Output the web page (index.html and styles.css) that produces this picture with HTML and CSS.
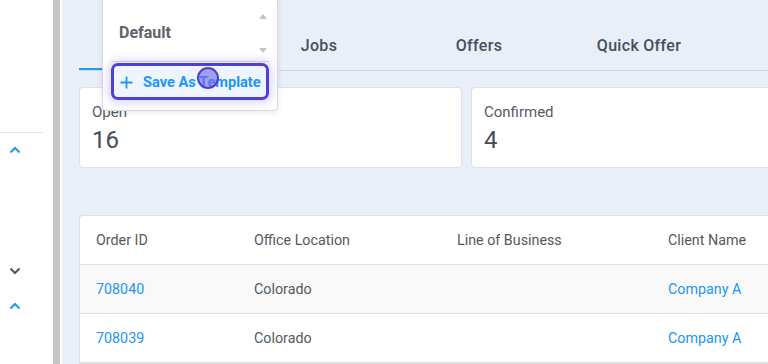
FILE: index.html
```html
<!DOCTYPE html>
<html>
<head>
<meta charset="utf-8">
<link rel="stylesheet" href="styles.css">
</head>
<body>
<div class="app">
  <aside class="sidebar">
    <div class="side-divider"></div>
    <div class="chev chev-up c1"><svg width="12" height="8" viewBox="0 0 12 8"><path d="M1.5 6.5 L6 2 L10.5 6.5" fill="none" stroke="#1e9be0" stroke-width="2"/></svg></div>
    <div class="chev chev-down c2"><svg width="12" height="8" viewBox="0 0 12 8"><path d="M1.5 1.5 L6 6 L10.5 1.5" fill="none" stroke="#555" stroke-width="2"/></svg></div>
    <div class="chev chev-up c3"><svg width="12" height="8" viewBox="0 0 12 8"><path d="M1.5 6.5 L6 2 L10.5 6.5" fill="none" stroke="#1e9be0" stroke-width="2"/></svg></div>
  </aside>
  <div class="scrollbar"></div>
  <div class="sliver"></div>
  <main class="main">
    <nav class="tabs">
      <div class="tab active"></div>
      <div class="tab">Jobs</div>
      <div class="tab">Offers</div>
      <div class="tab">Quick Offer</div>
    </nav>
    <section class="cards">
      <div class="card">
        <div class="card-label">Open</div>
        <div class="card-value">16</div>
      </div>
      <div class="card">
        <div class="card-label">Confirmed</div>
        <div class="card-value">4</div>
      </div>
    </section>
    <section class="table">
      <div class="row head">
        <div class="c col1">Order ID</div>
        <div class="c col2">Office Location</div>
        <div class="c col3">Line of Business</div>
        <div class="c col4">Client Name</div>
      </div>
      <div class="row alt">
        <div class="c col1 link">708040</div>
        <div class="c col2">Colorado</div>
        <div class="c col3"></div>
        <div class="c col4 link">Company A</div>
      </div>
      <div class="row">
        <div class="c col1 link">708039</div>
        <div class="c col2">Colorado</div>
        <div class="c col3"></div>
        <div class="c col4 link">Company A</div>
      </div>
    </section>
  </main>
</div>

<div class="dropdown">
  <div class="dd-select">
    <span class="dd-value">Default</span>
    <span class="dd-arrows">
      <svg width="8" height="5" viewBox="0 0 8 5"><path d="M0 5 L4 0 L8 5 Z" fill="#c4c4c4"/></svg>
      <svg width="8" height="5" viewBox="0 0 8 5"><path d="M0 0 L4 5 L8 0 Z" fill="#c4c4c4"/></svg>
    </span>
  </div>
  <div class="dd-divider"></div>
  <div class="dd-button">
    <svg class="plus" width="13" height="13" viewBox="0 0 13 13"><path d="M6.5 0.5 V12.5 M0.5 6.5 H12.5" stroke="#2196f3" stroke-width="1.8"/></svg>
    <span>Save As Template</span>
  </div>
  <div class="cursor"></div>
</div>
</body>
</html>
```

FILE: styles.css
```css
* { box-sizing: border-box; }
html, body {
  margin: 0;
  padding: 0;
  width: 768px;
  height: 364px;
  overflow: hidden;
  font-family: Roboto, "Liberation Sans", sans-serif;
}
.app {
  display: flex;
  height: 364px;
}
.sidebar {
  width: 53px;
  flex: none;
  background: #fff;
  display: flex;
  flex-direction: column;
}
.side-divider {
  margin-top: 132px;
  width: 43px;
  height: 1px;
  background: #e3e3e3;
}
.chev {
  width: 12px;
  height: 8px;
  margin-left: 9px;
  display: flex;
}
.c1 { margin-top: 13px; }
.c2 { margin-top: 113px; }
.c3 { margin-top: 27px; }
.scrollbar {
  width: 7px;
  flex: none;
  background: #c5c5c5;
}
.sliver {
  width: 2px;
  flex: none;
  background: #fff;
}
.main {
  flex: 1;
  min-width: 0;
  background: #e8eff9;
  padding-left: 17px;
  overflow: hidden;
}
.tabs {
  height: 71px;
  display: flex;
  align-items: flex-end;
  border-bottom: 1px solid #cfd7e2;
  width: 1000px;
}
.tab {
  width: 160px;
  height: 50px;
  display: flex;
  align-items: center;
  justify-content: center;
  font-size: 16px;
  font-weight: 500;
  color: #474f5f;
  letter-spacing: 0.3px;
}
.tab.active {
  box-shadow: inset 0 -2px 0 #1aa3e8;
}
.cards {
  display: flex;
  gap: 9px;
  margin-top: 16px;
  width: 1000px;
}
.card {
  width: 383px;
  height: 81px;
  background: #fff;
  border: 1px solid #dde1e6;
  border-radius: 4px;
  padding: 14px 12px 0;
  flex: none;
}
.card-label {
  font-size: 15px;
  color: #555c66;
  line-height: 20px;
}
.card-value {
  font-size: 24px;
  color: #454b55;
  line-height: 30px;
  margin-top: 3px;
}
.table {
  margin-top: 47px;
  width: 800px;
  background: #fff;
  border: 1px solid #dde1e6;
  border-radius: 4px 0 0 0;
  border-right: none;
}
.row {
  display: flex;
  height: 49px;
  align-items: center;
  border-bottom: 1px solid #e2e2e2;
  font-size: 14.3px;
  color: #555a60;
}
.row.head { height: 49px; }
.row.alt { background: #f9f9f9; }
.c { flex: none; }
.col1 { width: 174px; padding-left: 16px; }
.col2 { width: 203px; }
.col3 { width: 211px; }
.col4 { width: 200px; }
.link { color: #2196f3; }

.dropdown {
  position: absolute;
  left: 102px;
  top: -4px;
  width: 176px;
  height: 115px;
  background: #fff;
  border: 1px solid #dcdcdc;
  border-radius: 4px;
  box-shadow: 0 2px 6px rgba(0,0,0,0.08);
  padding: 4px 8px 0 8px;
}
.dd-select {
  height: 60px;
  display: flex;
  align-items: center;
  justify-content: space-between;
  padding-left: 8px;
  padding-right: 2px;
}
.dd-value {
  font-size: 16px;
  font-weight: 700;
  color: #5f6368;
  margin-top: 2px;
}
.dd-arrows {
  display: flex;
  flex-direction: column;
  gap: 29px;
  margin-top: 4px;
}
.dd-arrows svg { display: block; }
.dd-divider {
  height: 1px;
  background: #dedede;
  margin: 0 0 3px 0;
}
.dd-button {
  position: relative;
  height: 37px;
  width: 158px;
  border: 3px solid #4f3fd6;
  border-radius: 7px;
  background: #eef5ff;
  box-shadow: 0 0 10px 3px rgba(110, 90, 235, 0.25);
  display: flex;
  align-items: center;
  padding-left: 6px;
  gap: 10px;
  font-size: 14.6px;
  font-weight: 700;
  color: #2196f3;
  margin-top: -2px;
}
.plus { flex: none; margin-top: 2px; }
.cursor {
  position: absolute;
  left: 94px;
  top: 70px;
  width: 22px;
  height: 22px;
  border-radius: 50%;
  background: rgba(115, 105, 230, 0.62);
  border: 2px solid #4f3fd6;
}
```
